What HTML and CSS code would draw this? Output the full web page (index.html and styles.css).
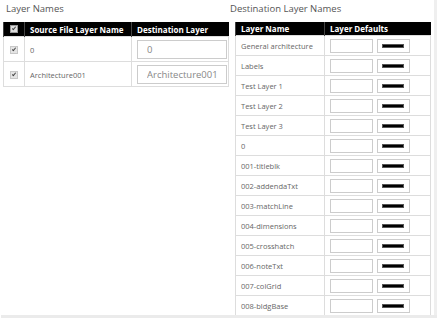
FILE: index.html
```html
<!DOCTYPE html>
<html lang="en">
<head>
  <meta charset="UTF-8" />
  <title>Layer Mapping</title>
  <link rel="stylesheet" href="styles.css">
</head>
<body>
  <div class="frame">
    <div class="viewport">
      <!-- Source layers -->
      <section class="pane src">
        <h2>Layer Names</h2>
        <table class="grid src-grid">
          <tr>
            <th class="chk-col"><span class="chk"></span></th>
            <th class="name-col">Source File Layer Name</th>
            <th>Destination Layer</th>
          </tr>
          <tr>
            <td class="chk-col"><span class="chk"></span></td>
            <td>0</td>
            <td><input class="dest" type="text" value="0"></td>
          </tr>
          <tr>
            <td class="chk-col"><span class="chk"></span></td>
            <td>Architecture001</td>
            <td><input class="dest" type="text" value="Architecture001"></td>
          </tr>
        </table>
      </section>

      <!-- Destination layers -->
      <section class="pane dst">
        <h2>Destination Layer Names</h2>
        <table class="grid dst-grid">
          <tr>
            <th class="lname-col">Layer Name</th>
            <th>Layer Defaults</th>
          </tr>
          <tr><td>General architecture</td><td><span class="swatch"></span><span class="pen"><i></i></span></td></tr>
          <tr><td>Labels</td><td><span class="swatch"></span><span class="pen"><i></i></span></td></tr>
          <tr><td>Test Layer 1</td><td><span class="swatch"></span><span class="pen"><i></i></span></td></tr>
          <tr><td>Test Layer 2</td><td><span class="swatch"></span><span class="pen"><i></i></span></td></tr>
          <tr><td>Test Layer 3</td><td><span class="swatch"></span><span class="pen"><i></i></span></td></tr>
          <tr><td>0</td><td><span class="swatch"></span><span class="pen"><i></i></span></td></tr>
          <tr><td>001-titleblk</td><td><span class="swatch"></span><span class="pen"><i></i></span></td></tr>
          <tr><td>002-addendaTxt</td><td><span class="swatch"></span><span class="pen"><i></i></span></td></tr>
          <tr><td>003-matchLine</td><td><span class="swatch"></span><span class="pen"><i></i></span></td></tr>
          <tr><td>004-dimensions</td><td><span class="swatch"></span><span class="pen"><i></i></span></td></tr>
          <tr><td>005-crosshatch</td><td><span class="swatch"></span><span class="pen"><i></i></span></td></tr>
          <tr><td>006-noteTxt</td><td><span class="swatch"></span><span class="pen"><i></i></span></td></tr>
          <tr><td>007-colGrid</td><td><span class="swatch"></span><span class="pen"><i></i></span></td></tr>
          <tr><td>008-bldgBase</td><td><span class="swatch"></span><span class="pen"><i></i></span></td></tr>
        </table>
      </section>
    </div>
    <div class="vbar"></div>
  </div>
  <div class="hbar"></div>
</body>
</html>
```

FILE: styles.css
```css
body, html {
  margin: 0;
  padding: 0;
  background-color: #fff;
  color: #666;
  font-family: "Open Sans", Arial, sans-serif;
}

/* Scroll frame */
.frame {
  display: flex;
  height: 315px;
}

.viewport {
  flex: 1;
  display: flex;
  align-items: flex-start;
  overflow: hidden;
}

.vbar {
  width: 3px;
  margin-left: 1px;
  background-color: #efefef;
}

.hbar {
  height: 3px;
  margin-left: 1px;
  background-color: #ebebeb;
}

/* Panes */
.pane h2 {
  margin: 0;
  height: 22px;
  line-height: 18px;
  font-size: 9.5px;
  font-weight: normal;
  color: #555;
}

.src {
  margin-left: 3px;
}

.src h2 {
  padding-left: 3px;
}

.dst {
  margin-left: 1px;
}

.dst .grid {
  margin-left: 5px;
}

/* Tables */
.grid {
  border-collapse: collapse;
  table-layout: fixed;
}

.grid th {
  background-color: #000;
  color: #fff;
  font-size: 8px;
  line-height: 11px;
  font-weight: bold;
  text-align: left;
  height: 14px;
  padding: 0 5px;
  border-left: 1px solid #444;
  white-space: nowrap;
}

.grid td {
  border: 1px solid #ddd;
  padding: 0 5px;
  font-size: 7.5px;
  white-space: nowrap;
}

.src-grid {
  width: 226px;
}

.src-grid td {
  height: 23px;
  padding-top: 1px;
}

.chk-col {
  width: 10px;
}

.name-col {
  width: 96px;
}

.dest {
  display: block;
  box-sizing: border-box;
  width: 90px;
  height: 19px;
  margin: 0;
  padding: 0 9px;
  border: 1px solid #ccc;
  font-family: "Open Sans", Arial, sans-serif;
  font-size: 9.5px;
  color: #888;
}

/* Checkbox */
.chk {
  display: block;
  position: relative;
  width: 6px;
  height: 6px;
  margin-left: 1px;
  background-color: #e4e4e4;
  border: 1px solid #c8c8c8;
}

.chk::after {
  content: "";
  position: absolute;
  left: 2px;
  top: 0;
  width: 1px;
  height: 3px;
  border: solid #444;
  border-width: 0 1px 1px 0;
  transform: rotate(40deg);
}

.grid th .chk {
  background-color: #ddd;
  border-color: #999;
}

.dst-grid {
  width: 196px;
}

.dst-grid th {
  height: 13px;
}

.dst-grid td {
  height: 19px;
}

.lname-col {
  width: 78px;
}

.swatch {
  display: inline-block;
  vertical-align: middle;
  box-sizing: border-box;
  width: 43px;
  height: 14px;
  border: 1px solid #ccc;
  background-color: #fff;
}

.pen {
  display: inline-block;
  vertical-align: middle;
  box-sizing: border-box;
  width: 33px;
  height: 14px;
  margin-left: 4px;
  border: 1px solid #ccc;
  padding: 4px 0 0 4px;
}

.pen i {
  display: block;
  width: 22px;
  height: 4px;
  box-sizing: border-box;
  background-color: #000;
  border: 1px solid #555;
}
```
